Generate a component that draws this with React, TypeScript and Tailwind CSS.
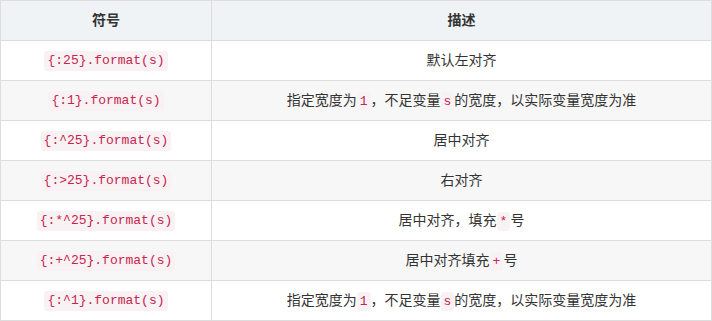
import React from "react";

const C = ({ children }: { children: React.ReactNode }) => (
  <code className="font-['Liberation_Mono',monospace] text-[13px] text-[#c7254e] bg-[#f9f2f4] rounded-[3px] px-[3px] py-[2px] leading-[16px]">
    {children}
  </code>
);

const rows: { code: string; desc: React.ReactNode }[] = [
  { code: "{:25}.format(s)", desc: <>默认左对齐</> },
  {
    code: "{:1}.format(s)",
    desc: (
      <>
        指定宽度为<C>1</C>，不足变量<C>s</C>的宽度，以实际变量宽度为准
      </>
    ),
  },
  { code: "{:^25}.format(s)", desc: <>居中对齐</> },
  { code: "{:>25}.format(s)", desc: <>右对齐</> },
  {
    code: "{:*^25}.format(s)",
    desc: (
      <>
        居中对齐，填充<C>*</C>号
      </>
    ),
  },
  {
    code: "{:+^25}.format(s)",
    desc: (
      <>
        居中对齐填充<C>+</C>号
      </>
    ),
  },
  {
    code: "{:^1}.format(s)",
    desc: (
      <>
        指定宽度为<C>1</C>，不足变量<C>s</C>的宽度，以实际变量宽度为准
      </>
    ),
  },
];

export default function App() {
  return (
    <div className="w-[712px] bg-white font-['Liberation_Sans','Noto_Sans_CJK_SC',sans-serif] text-[14px] text-[#333]">
      <div className="grid grid-cols-[211px_500px] border-l border-t border-[#dddddd]">
        <div className="h-10 flex items-center justify-center border-r border-b border-[#dddddd] bg-[#eff3f6] font-bold">
          符号
        </div>
        <div className="h-10 flex items-center justify-center border-r border-b border-[#dddddd] bg-[#eff3f6] font-bold">
          描述
        </div>
        {rows.map((r, i) => {
          const bg = i % 2 === 1 ? "bg-[#f7f7f7]" : "bg-white";
          return (
            <React.Fragment key={i}>
              <div className={`h-10 flex items-center justify-center border-r border-b border-[#dddddd] ${bg}`}>
                <C>{r.code}</C>
              </div>
              <div className={`h-10 flex items-center justify-center border-r border-b border-[#dddddd] ${bg}`}>
                <span>{r.desc}</span>
              </div>
            </React.Fragment>
          );
        })}
      </div>
    </div>
  );
}
